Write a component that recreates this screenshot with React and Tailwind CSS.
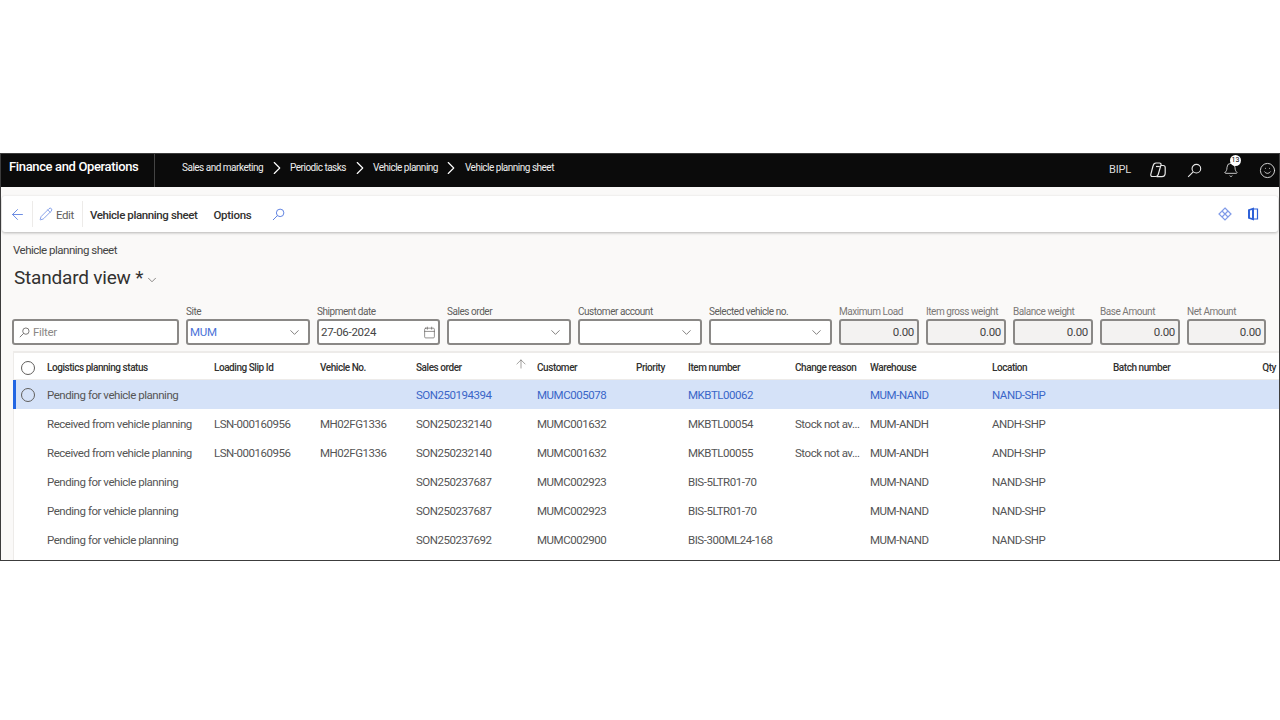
import React from 'react'
import { ChevronDown, ChevronRight, ArrowLeft, ArrowUp, Pencil, Bell, Smile, Calendar } from 'lucide-react'

const columns = [
    { title: 'Logistics planning status', key: 'status', width: 'w-[167px]' },
    { title: 'Loading Slip Id', key: 'slip', width: 'w-[106px]' },
    { title: 'Vehicle No.', key: 'vehicle', width: 'w-[96px]' },
    { title: 'Sales order', key: 'order', width: 'w-[121px]' },
    { title: 'Customer', key: 'customer', width: 'w-[99px]' },
    { title: 'Priority', key: 'priority', width: 'w-[52px]' },
    { title: 'Item number', key: 'item', width: 'w-[107px]' },
    { title: 'Change reason', key: 'reason', width: 'w-[75px]' },
    { title: 'Warehouse', key: 'warehouse', width: 'w-[122px]' },
    { title: 'Location', key: 'location', width: 'w-[121px]' },
    { title: 'Batch number', key: 'batch', width: 'w-[140px]' },
]

const rows = [
    { status: 'Pending for vehicle planning', order: 'SON250194394', customer: 'MUMC005078', item: 'MKBTL00062', warehouse: 'MUM-NAND', location: 'NAND-SHP', selected: true },
    { status: 'Received from vehicle planning', slip: 'LSN-000160956', vehicle: 'MH02FG1336', order: 'SON250232140', customer: 'MUMC001632', item: 'MKBTL00054', reason: 'Stock not av...', warehouse: 'MUM-ANDH', location: 'ANDH-SHP' },
    { status: 'Received from vehicle planning', slip: 'LSN-000160956', vehicle: 'MH02FG1336', order: 'SON250232140', customer: 'MUMC001632', item: 'MKBTL00055', reason: 'Stock not av...', warehouse: 'MUM-ANDH', location: 'ANDH-SHP' },
    { status: 'Pending for vehicle planning', order: 'SON250237687', customer: 'MUMC002923', item: 'BIS-5LTR01-70', warehouse: 'MUM-NAND', location: 'NAND-SHP' },
    { status: 'Pending for vehicle planning', order: 'SON250237687', customer: 'MUMC002923', item: 'BIS-5LTR01-70', warehouse: 'MUM-NAND', location: 'NAND-SHP' },
    { status: 'Pending for vehicle planning', order: 'SON250237692', customer: 'MUMC002900', item: 'BIS-300ML24-168', warehouse: 'MUM-NAND', location: 'NAND-SHP' },
]

const linkKeys = ['order', 'customer', 'item', 'warehouse', 'location']

const crumbs = ['Sales and marketing', 'Periodic tasks', 'Vehicle planning', 'Vehicle planning sheet']

const boxClass = 'h-[26px] rounded-[3px] border-2 border-[#8a8886] flex items-center'
const labelClass = 'text-[10px] leading-[14px] mb-0 tracking-[-0.45px] whitespace-nowrap'

const SearchIcon = ({ size, color, className }) => (
    <svg width={size} height={size} viewBox="0 0 16 16" fill="none" stroke={color} strokeWidth="1.2" className={className}>
        <circle cx="10" cy="6" r="4.6" />
        <path d="M6.6 9.4L1.2 14.8" />
    </svg>
)

const SelectField = ({ label, value, width }) => (
    <div className={`flex flex-col ${width}`}>
        <span className={`${labelClass} text-[#605e5c]`}>{label}</span>
        <div className={`${boxClass} bg-white pl-[2px] pr-1.5 justify-between`}>
            <span className="pt-[2px] text-[11.5px] tracking-[-0.3px] text-[#4a72d8]">{value}</span>
            <ChevronDown size={15} strokeWidth={1.25} className="text-[#605e5c]" />
        </div>
    </div>
)

const AmountField = ({ label, width }) => (
    <div className={`flex flex-col ${width}`}>
        <span className={`${labelClass} text-[#7a7876]`}>{label}</span>
        <div className={`${boxClass} bg-[#f3f2f1] pr-[3px] justify-end`}>
            <span className="pt-[2px] text-[11.5px] tracking-[-0.3px] text-[#444]">0.00</span>
        </div>
    </div>
)

const CopilotIcon = () => (
    <svg width="18" height="18" viewBox="0 0 18 18" fill="none" stroke="#e8e8e8" strokeWidth="1.2">
        <path d="M7 2h3.5c1.2 0 1.8.8 1.5 1.9L9.2 13.5c-.4 1.3-1.2 2-2.5 2H3.4c-1.3 0-1.9-.9-1.6-2.1L4 5c.4-1.7 1.4-3 3-3z" />
        <path d="M12 4.5h2.2c1.3 0 2 .8 2 2v5.6c0 2-1.4 3.6-3.4 3.6H7.5" />
        <path d="M7 5.5h3.8" />
    </svg>
)

const DiamondIcon = () => (
    <svg width="14" height="14" viewBox="0 0 14 14" fill="none" stroke="#7f9ae8" strokeWidth="1.2">
        <path d="M7 1l3 3-3 3-3-3zM10 4l3 3-3 3-3-3zM4 4l3 3-3 3-3-3zM7 7l3 3-3 3-3-3z" />
    </svg>
)

const OfficeIcon = () => (
    <svg width="12" height="14" viewBox="0 0 12 14">
        <path d="M1 2.5L7 .5v13l-6-2z" fill="#2f62d8" />
        <path d="M7 2h3.5v10H7" fill="none" stroke="#2f62d8" strokeWidth="1.2" />
        <path d="M3 3.5l2-.6v8.2l-2-.6z" fill="#ffffff" />
    </svg>
)

const App = () => {
    return (
        <div className="min-h-screen bg-white pt-[153px] font-['Roboto',sans-serif]">
            <div className="h-[408px] border border-[#3c3c3c] bg-[#faf9f8] overflow-hidden">
                {/* top bar */}
                <div className="h-[33px] bg-[#0b0b0b] text-white flex items-center">
                    <div className="w-[154px] h-full border-r border-[#444] pl-[8px] flex items-center pb-[7px]">
                        <span className="text-[13px] font-medium tracking-[-0.36px] whitespace-nowrap">Finance and Operations</span>
                    </div>
                    <div className="flex items-center pl-[27px] pb-[6px]">
                        {crumbs.map((crumb, index) => (
                            <React.Fragment key={crumb}>
                                {index > 0 && <ChevronRight size={22} strokeWidth={1.25} className="mx-[2.5px] text-white" />}
                                <span className="text-[10px] tracking-[-0.5px] whitespace-nowrap text-[#eee]">{crumb}</span>
                            </React.Fragment>
                        ))}
                    </div>
                    <div className="ml-auto flex items-center pb-[1px]">
                        <span className="text-[11px] tracking-[-0.2px] text-[#ddd] mr-[18px]">BIPL</span>
                        <CopilotIcon />
                        <SearchIcon size={15} color="#e8e8e8" className="ml-[20px]" />
                        <div className="relative ml-[21px]">
                            <Bell size={16} strokeWidth={1.25} className="text-[#e8e8e8]" />
                            <span className="absolute -top-[7px] left-[7px] w-[11px] h-[11px] rounded-full bg-white text-black text-[7px] leading-[11px] text-center">13</span>
                        </div>
                        <Smile size={17} strokeWidth={1.25} className="ml-[20px] mr-[3px] text-[#e8e8e8]" />
                    </div>
                </div>

                {/* action pane */}
                <div className="mt-[9px] mx-[1px] h-[36px] rounded-[3px] bg-white shadow-[0_1px_3px_rgba(0,0,0,0.28)] flex items-center">
                    <div className="w-[31px] h-[26px] border-r border-[#edebe9] flex items-center pl-[7px]">
                        <ArrowLeft size={17} strokeWidth={1.25} className="text-[#5b7fe0]" />
                    </div>
                    <div className="h-[26px] border-r border-[#edebe9] flex items-center pl-[6px] pr-[8px]">
                        <Pencil size={14} strokeWidth={1.25} className="text-[#5b7fe0]" />
                        <span className="ml-[3px] pt-[3px] text-[11.5px] tracking-[-0.4px] text-[#605e5c]">Edit</span>
                    </div>
                    <span className="ml-[7px] pt-[3px] text-[11.5px] font-medium tracking-[-0.39px] text-[#323130] whitespace-nowrap">Vehicle planning sheet</span>
                    <span className="ml-4 pt-[3px] text-[11.5px] font-medium tracking-[-0.3px] text-[#323130]">Options</span>
                    <SearchIcon size={13} color="#5b7fe0" className="ml-[21px]" />
                    <div className="ml-auto flex items-center gap-[15px] pr-[19px]">
                        <DiamondIcon />
                        <OfficeIcon />
                    </div>
                </div>

                {/* title */}
                <div className="pl-3 pt-[10px]">
                    <div className="text-[11.5px] leading-[16px] tracking-[-0.5px] text-[#444]">Vehicle planning sheet</div>
                    <div className="mt-[6px] pl-[1px] flex items-center leading-[28px] text-[#323130]">
                        <span className="text-[19px] tracking-[-0.2px]">Standard view *</span>
                        <ChevronDown size={14} strokeWidth={1.25} className="ml-[2px] mt-[3px] text-[#605e5c]" />
                    </div>
                </div>

                {/* filters */}
                <div className="mt-[13px] ml-[11px] flex items-end gap-[7px]">
                    <div className={`${boxClass} w-[167px] bg-white pl-[5px]`}>
                        <SearchIcon size={11} color="#605e5c" />
                        <span className="ml-[3px] pt-[2px] text-[11.5px] tracking-[-0.3px] text-[#8a8886]">Filter</span>
                    </div>
                    <SelectField label="Site" value="MUM" width="w-[124px]" />
                    <div className="flex flex-col w-[123px]">
                        <span className={`${labelClass} text-[#605e5c]`}>Shipment date</span>
                        <div className={`${boxClass} bg-white pl-[2px] pr-[2px] justify-between`}>
                            <span className="pt-[2px] text-[11.5px] tracking-[-0.3px] text-[#444]">27-06-2024</span>
                            <Calendar size={13} strokeWidth={1.25} className="text-[#605e5c]" />
                        </div>
                    </div>
                    <SelectField label="Sales order" value="" width="w-[124px]" />
                    <SelectField label="Customer account" value="" width="w-[124px]" />
                    <SelectField label="Selected vehicle no." value="" width="w-[123px]" />
                    <AmountField label="Maximum Load" width="w-[80px]" />
                    <AmountField label="Item gross weight" width="w-[80px]" />
                    <AmountField label="Balance weight" width="w-[80px]" />
                    <AmountField label="Base Amount" width="w-[80px]" />
                    <AmountField label="Net Amount" width="w-[79px]" />
                </div>

                {/* grid */}
                <div className="mt-[6px] ml-3 bg-white border-t-2 border-l border-[#edebe9] h-[220px]">
                    <div className="h-[27px] pt-[3px] flex items-center border-b border-[#edebe9]">
                        <div className="w-[33px] pl-[7px]">
                            <span className="block w-[14px] h-[14px] rounded-full border border-[#605e5c]" />
                        </div>
                        {columns.map((col) => (
                            <div key={col.key} className={`${col.width} relative text-[10px] font-medium tracking-[-0.45px] text-[#323130] whitespace-nowrap`}>
                                {col.title}
                                {col.key === 'order' && <ArrowUp size={14} strokeWidth={1} className="absolute left-[98px] -top-[3px] text-[#605e5c]" />}
                            </div>
                        ))}
                        <div className="ml-auto pr-[3px] text-[10px] font-medium tracking-[-0.45px] text-[#323130]">Qty</div>
                    </div>
                    {rows.map((row, index) => (
                        <div key={index} className={`h-[29px] pt-[1px] flex items-center ${row.selected ? 'bg-[#d5e2f8] border-l-[3px] border-[#2266e3] -ml-[1px]' : ''}`}>
                            <div className={`${row.selected ? 'w-[31px] pl-[5px]' : 'w-[33px]'}`}>
                                {row.selected && <span className="block w-[14px] h-[14px] rounded-full border border-[#605e5c]" />}
                            </div>
                            {columns.map((col) => (
                                <div
                                    key={col.key}
                                    className={`${col.width} pt-[2px] text-[11.5px] tracking-[-0.46px] whitespace-nowrap ${row.selected && linkKeys.includes(col.key) ? 'text-[#3a66c8]' : 'text-[#555]'}`}
                                >
                                    {row[col.key]}
                                </div>
                            ))}
                        </div>
                    ))}
                </div>
            </div>
        </div>
    )
}

export default App
